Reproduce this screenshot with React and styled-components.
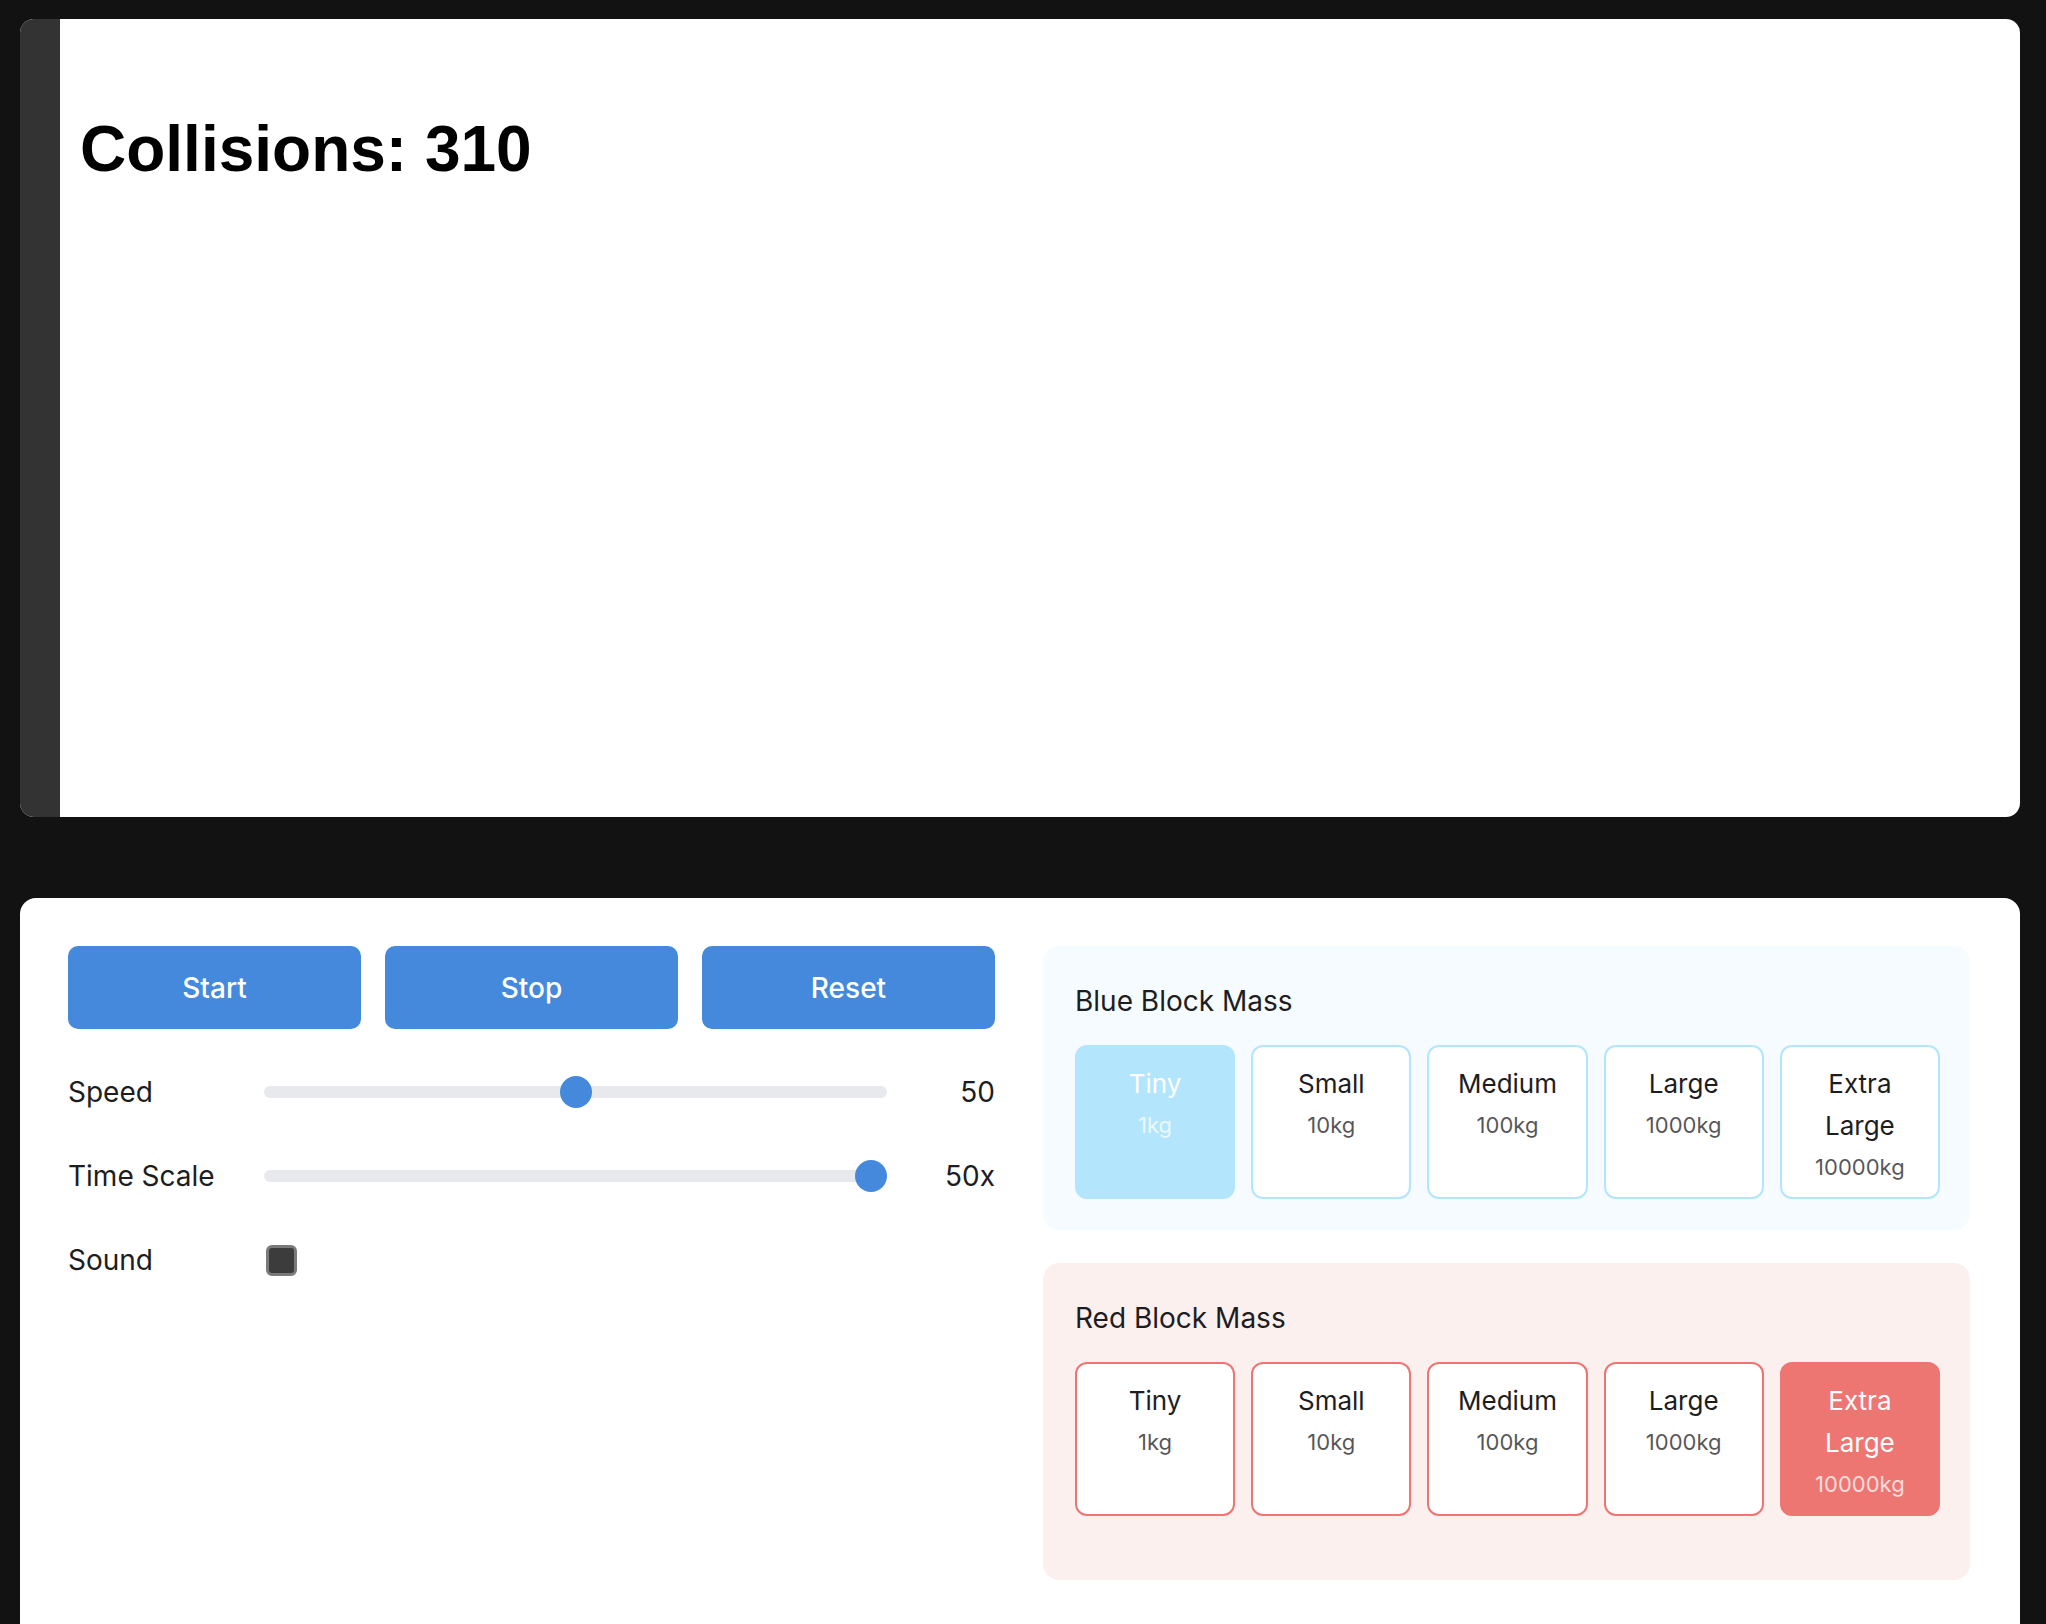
import React, { useState } from "react";
import styled, { createGlobalStyle } from "styled-components";

const GlobalStyle = createGlobalStyle`
  html, body {
    margin: 0;
    padding: 0;
    background: #121212;
  }
  * {
    box-sizing: border-box;
  }
`;

const SIZES = [
  { name: "Tiny", kg: "1kg" },
  { name: "Small", kg: "10kg" },
  { name: "Medium", kg: "100kg" },
  { name: "Large", kg: "1000kg" },
  { name: "Extra Large", kg: "10000kg" },
];

const TONES = {
  blue: { panel: "#f5fbfe", border: "#b3e5fc", active: "#b3e5fc" },
  red: { panel: "#fcf0ef", border: "#ee7672", active: "#ee7672" },
};

const App = () => {
  const [speed, setSpeed] = useState(50);
  const [timeScale, setTimeScale] = useState(50);
  const [sound, setSound] = useState(false);
  const [blueMass, setBlueMass] = useState("Tiny");
  const [redMass, setRedMass] = useState("Extra Large");

  return (
    <>
      <GlobalStyle />
      <Page>
        {/* 시뮬레이션 캔버스 */}
        <Stage>
          <Wall />
          <Canvas>
            <Counter>Collisions: 310</Counter>
          </Canvas>
        </Stage>

        <Panel>
          <Controls>
            <ButtonRow>
              <ActionButton>Start</ActionButton>
              <ActionButton>Stop</ActionButton>
              <ActionButton>Reset</ActionButton>
            </ButtonRow>

            <SettingRow>
              <Label>Speed</Label>
              <Range
                type="range"
                min={0}
                max={100}
                value={speed}
                onChange={(e) => setSpeed(Number(e.target.value))}
              />
              <Value>{speed}</Value>
            </SettingRow>

            <SettingRow>
              <Label>Time Scale</Label>
              <Range
                type="range"
                min={1}
                max={50}
                value={timeScale}
                onChange={(e) => setTimeScale(Number(e.target.value))}
              />
              <Value>{timeScale}x</Value>
            </SettingRow>

            <SettingRow>
              <Label>Sound</Label>
              <Check
                type="checkbox"
                checked={sound}
                onChange={(e) => setSound(e.target.checked)}
              />
            </SettingRow>
          </Controls>

          <MassColumn>
            <MassBox tone="blue">
              <MassTitle>Blue Block Mass</MassTitle>
              <MassGrid>
                {SIZES.map((s) => (
                  <MassButton
                    key={s.name}
                    tone="blue"
                    $active={blueMass === s.name}
                    onClick={() => setBlueMass(s.name)}
                  >
                    <MassName>{s.name}</MassName>
                    <MassKg>{s.kg}</MassKg>
                  </MassButton>
                ))}
              </MassGrid>
            </MassBox>

            <MassBox tone="red" $tall>
              <MassTitle>Red Block Mass</MassTitle>
              <MassGrid>
                {SIZES.map((s) => (
                  <MassButton
                    key={s.name}
                    tone="red"
                    $active={redMass === s.name}
                    onClick={() => setRedMass(s.name)}
                  >
                    <MassName>{s.name}</MassName>
                    <MassKg>{s.kg}</MassKg>
                  </MassButton>
                ))}
              </MassGrid>
            </MassBox>
          </MassColumn>
        </Panel>
      </Page>
    </>
  );
};

export default App;

const Page = styled.div`
  display: flex;
  flex-direction: column;
  gap: 81px;
  padding: 19px 26px 0 20px;
  font-family: Inter, "Noto Sans", sans-serif;
  color: #1d1d1f;
`;

const Stage = styled.div`
  display: flex;
  height: 798px;
  border-radius: 14px;
  overflow: hidden;
  background: #ffffff;
`;

const Wall = styled.div`
  width: 40px;
  background: #333333;
`;

const Canvas = styled.div`
  flex: 1;
  padding: 93px 20px 0;
`;

const Counter = styled.h1`
  margin: 0;
  font-family: "Liberation Sans", Arial, sans-serif;
  font-weight: 700;
  font-size: 64px;
  color: #000000;
`;

const Panel = styled.div`
  display: grid;
  grid-template-columns: 1fr 1fr;
  gap: 48px;
  align-items: start;
  background: #ffffff;
  border-radius: 16px 16px 0 0;
  padding: 48px 50px 48px 48px;
  min-height: 740px;
`;

const Controls = styled.div`
  display: flex;
  flex-direction: column;
  gap: 36px;
`;

const ButtonRow = styled.div`
  display: grid;
  grid-template-columns: repeat(3, 1fr);
  gap: 24px;
  margin-bottom: 3px;
`;

const ActionButton = styled.button`
  height: 83px;
  border: none;
  border-radius: 10px;
  background: #4589dd;
  color: #ffffff;
  font-family: Inter, sans-serif;
  font-size: 28px;
  font-weight: 500;
  cursor: pointer;
`;

const SettingRow = styled.div`
  display: grid;
  grid-template-columns: 196px 1fr 108px;
  align-items: center;
  height: 48px;
`;

const Label = styled.div`
  font-size: 28px;
  color: #1d1d1f;
`;

const Value = styled.div`
  font-size: 28px;
  text-align: right;
  color: #1d1d1f;
`;

const Range = styled.input`
  -webkit-appearance: none;
  appearance: none;
  width: 100%;
  height: 12px;
  margin: 0;
  border-radius: 6px;
  background: #e8e9ed;
  outline: none;

  &::-webkit-slider-thumb {
    -webkit-appearance: none;
    width: 32px;
    height: 32px;
    border-radius: 50%;
    background: #4589dd;
    border: none;
    cursor: pointer;
  }
  &::-moz-range-thumb {
    width: 32px;
    height: 32px;
    border-radius: 50%;
    background: #4589dd;
    border: none;
  }
`;

const Check = styled.input`
  -webkit-appearance: none;
  appearance: none;
  width: 31px;
  height: 31px;
  margin: 0 0 0 2px;
  border-radius: 6px;
  border: 3px solid #7a7a7a;
  background: #3c3c3c;
  cursor: pointer;
`;

const MassColumn = styled.div`
  display: flex;
  flex-direction: column;
  gap: 33px;
`;

const MassBox = styled.div`
  background: ${(p) => TONES[p.tone].panel};
  border-radius: 16px;
  padding: 32px 30px ${(p) => (p.$tall ? "64px" : "31px")} 32px;
`;

const MassTitle = styled.div`
  font-size: 28px;
  line-height: 46px;
  margin-bottom: 21px;
  color: #1d1d1f;
`;

const MassGrid = styled.div`
  display: grid;
  grid-template-columns: repeat(5, 1fr);
  gap: 16px;
`;

const MassButton = styled.button`
  display: flex;
  flex-direction: column;
  align-items: center;
  height: 154px;
  padding: 16px 8px 10px;
  border-radius: 12px;
  border: 2px solid ${(p) => TONES[p.tone].border};
  background: ${(p) => (p.$active ? TONES[p.tone].active : "#ffffff")};
  color: ${(p) => (p.$active ? "#ffffff" : "#1d1d1f")};
  font-family: Inter, sans-serif;
  cursor: pointer;
`;

const MassName = styled.span`
  font-size: 26px;
  line-height: 42px;
  text-align: center;
`;

const MassKg = styled.span`
  font-size: 22px;
  line-height: 40px;
  opacity: 0.75;
`;
